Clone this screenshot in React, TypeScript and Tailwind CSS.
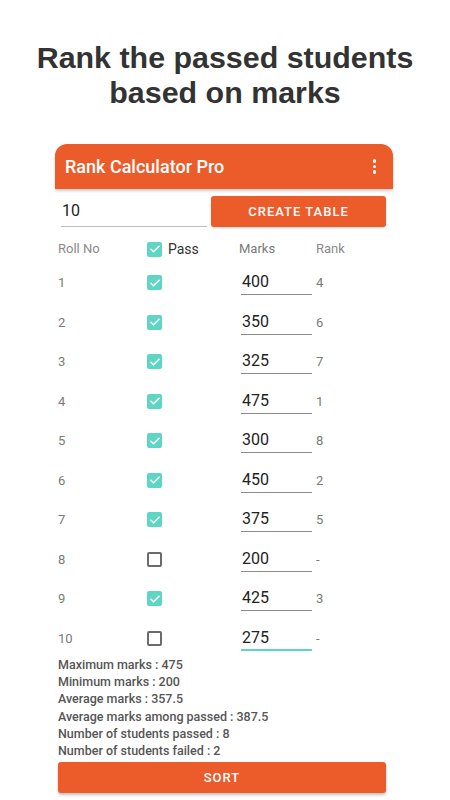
import React from 'react';

const rows = [
  { roll: 1, pass: true, marks: '400', rank: '4' },
  { roll: 2, pass: true, marks: '350', rank: '6' },
  { roll: 3, pass: true, marks: '325', rank: '7' },
  { roll: 4, pass: true, marks: '475', rank: '1' },
  { roll: 5, pass: true, marks: '300', rank: '8' },
  { roll: 6, pass: true, marks: '450', rank: '2' },
  { roll: 7, pass: true, marks: '375', rank: '5' },
  { roll: 8, pass: false, marks: '200', rank: '-' },
  { roll: 9, pass: true, marks: '425', rank: '3' },
  { roll: 10, pass: false, marks: '275', rank: '-' },
];

const stats = [
  'Maximum marks : 475',
  'Minimum marks : 200',
  'Average marks : 357.5',
  'Average marks among passed : 387.5',
  'Number of students passed : 8',
  'Number of students failed : 2',
];

function Check({ on }: { on: boolean }) {
  if (!on) {
    return <div className="w-[15px] h-[15px] rounded-[2px] border-2 border-[#6b6b6b]" />;
  }
  return (
    <div className="w-[15px] h-[15px] rounded-[2px] bg-[#5fd6c3] flex items-center justify-center">
      <svg width="12" height="12" viewBox="0 0 24 24" fill="none" stroke="white" strokeWidth="3" strokeLinecap="square">
        <path d="M4 12.5l5 5L20 6.5" />
      </svg>
    </div>
  );
}

export default function App() {
  return (
    <div className="w-[450px] h-[800px] bg-white overflow-hidden font-['Roboto',sans-serif]">
      {/* heading */}
      <h1 className="pt-[40px] text-center text-[30.4px] leading-[35px] font-bold text-[#333333] font-['Liberation_Sans',Arial,sans-serif]">
        Rank the passed students
        <br />
        based on marks
      </h1>

      <div className="mt-[34px] ml-[55px] w-[338px]">
        {/* app bar */}
        <div className="h-[45px] rounded-t-[12px] bg-[#ec5c2b] shadow-[0_2px_3px_rgba(0,0,0,0.2)] flex items-center justify-between pl-[10px] pr-[17px]">
          <span className="text-white text-[18px] font-medium">Rank Calculator Pro</span>
          <div className="flex flex-col gap-[2px]">
            <span className="w-[3.5px] h-[3.5px] rounded-full bg-white" />
            <span className="w-[3.5px] h-[3.5px] rounded-full bg-white" />
            <span className="w-[3.5px] h-[3.5px] rounded-full bg-white" />
          </div>
        </div>

        <div className="pl-[3px] pr-[7px]">
          {/* count + create */}
          <div className="mt-[7px] h-[31px] flex items-end gap-[4px]">
            <div className="ml-[3px] w-[146px] h-[27px] border-b-[1.5px] border-[#bdbdbd] text-[16px] text-[#222] pl-[1px] leading-[22px]">
              10
            </div>
            <button className="ml-auto w-[175px] h-[31px] rounded-[3px] bg-[#ec5c2b] text-white text-[13px] font-medium tracking-[1px] shadow-[0_1px_2px_rgba(0,0,0,0.2)]">
              CREATE TABLE
            </button>
          </div>

          {/* header */}
          <div className="mt-[8px] h-[28px] grid grid-cols-[89px_92px_77px_1fr] items-center text-[13px]">
            <span className="text-[#8a8a8a]">Roll No</span>
            <div className="flex items-center gap-[6px]">
              <Check on />
              <span className="text-[14px] text-[#333]">Pass</span>
            </div>
            <span className="text-[#7a7a7a]">Marks</span>
            <span className="text-[#8a8a8a]">Rank</span>
          </div>

          {/* rows */}
          {rows.map((r) => (
            <div key={r.roll} className="h-[39.5px] grid grid-cols-[89px_92px_77px_1fr] items-center text-[13px]">
              <span className="text-[#7a7a7a]">{r.roll}</span>
              <Check on={r.pass} />
              <div
                className={
                  r.roll === 10
                    ? 'ml-[2px] w-[71px] h-[25px] border-b-2 border-[#5fd6c3] text-[16px] text-[#222] leading-[24px] pl-[1px]'
                    : 'ml-[2px] w-[71px] h-[25px] border-b-[1.5px] border-[#8c8c8c] text-[16px] text-[#222] leading-[24px] pl-[1px]'
                }
              >
                {r.marks}
              </div>
              <span className="text-[#7a7a7a]">{r.rank}</span>
            </div>
          ))}

          {/* summary */}
          <div className="mt-[-2px]">
            {stats.map((s) => (
              <div key={s} className="text-[12.5px] leading-[17.2px] font-medium text-[#555]">
                {s}
              </div>
            ))}
          </div>

          <button className="mt-[3px] w-full h-[31px] rounded-[3px] bg-[#ec5c2b] text-white text-[13px] font-medium tracking-[1px] shadow-[0_2px_3px_rgba(0,0,0,0.25)]">
            SORT
          </button>
        </div>
      </div>
    </div>
  );
}
